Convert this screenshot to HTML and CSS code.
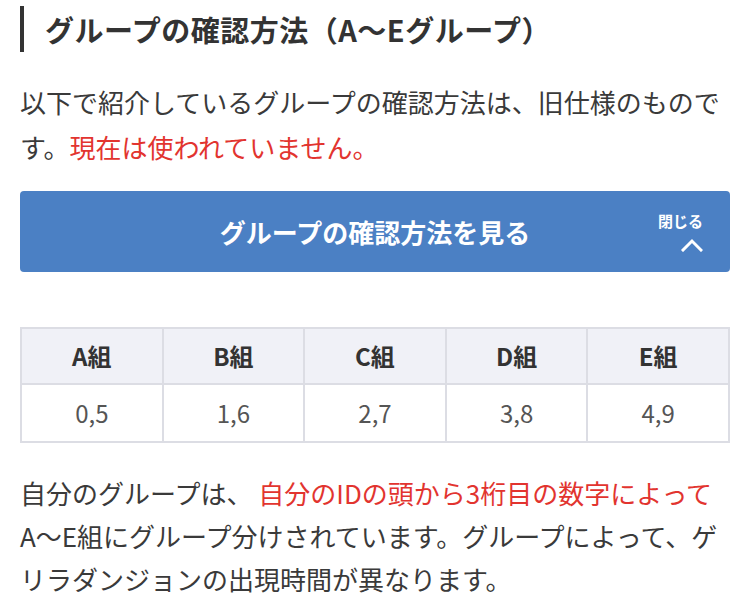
FILE: index.html
```html
<!DOCTYPE html>
<html lang="ja">
<head>
<meta charset="utf-8">
<title>グループの確認方法</title>
<link rel="stylesheet" href="styles.css">
</head>
<body>
<main class="content">
  <h3 class="heading">グループの確認方法（A〜Eグループ）</h3>
  <p class="text">以下で紹介しているグループの確認方法は、旧仕様のものです。<span class="red">現在は使われていません。</span></p>
  <div class="toggle-btn">
    <span class="spacer"></span>
    <span class="btn-title">グループの確認方法を見る</span>
    <span class="btn-side">
      <span class="close-label">閉じる</span>
      <svg class="chevron" width="22" height="14" viewBox="0 0 22 14"><path d="M2 12 L11 3 L20 12" fill="none" stroke="#fff" stroke-width="3" stroke-linecap="square"/></svg>
    </span>
  </div>
  <table class="groups">
    <thead>
      <tr><th>A組</th><th>B組</th><th>C組</th><th>D組</th><th>E組</th></tr>
    </thead>
    <tbody>
      <tr><td>0,5</td><td>1,6</td><td>2,7</td><td>3,8</td><td>4,9</td></tr>
    </tbody>
  </table>
  <p class="text text-bottom">自分のグループは、 <span class="red">自分のIDの頭から3桁目の数字によって</span>A〜E組にグループ分けされています。グループによって、ゲリラダンジョンの出現時間が異なります。</p>
</main>
</body>
</html>
```

FILE: styles.css
```css
html, body {
  margin: 0;
  padding: 0;
  background: #fff;
}
body {
  font-family: "Noto Sans CJK JP", "Noto Sans", sans-serif;
  color: #333;
}
.content {
  padding: 6px 20px 0;
}
.heading {
  margin: 0;
  border-left: 4px solid #333;
  padding-left: 21px;
  font-size: 29px;
  line-height: 46px;
  font-weight: 700;
  letter-spacing: 0.5px;
  color: #333;
}
.text {
  margin: 27px 0 0;
  font-size: 26px;
  line-height: 45px;
  color: #3a3a3a;
}
.red {
  color: #e2342f;
}
.toggle-btn {
  margin-top: 22px;
  height: 81px;
  background: #4b80c4;
  border-radius: 4px;
  display: grid;
  grid-template-columns: 1fr auto 1fr;
  align-items: center;
  color: #fff;
}
.btn-title {
  font-size: 26px;
  font-weight: 700;
  letter-spacing: 0;
}
.btn-side {
  justify-self: end;
  padding-right: 27px;
  display: flex;
  flex-direction: column;
  align-items: flex-end;
  gap: 8px;
}
.close-label {
  font-size: 15px;
  font-weight: 700;
  line-height: 18px;
}
.chevron {
  display: block;
}
.groups {
  margin-top: 55px;
  width: 100%;
  border-collapse: collapse;
  table-layout: fixed;
  font-size: 24px;
}
.groups th, .groups td {
  border: 2px solid #dcdde4;
  text-align: center;
  line-height: 36px;
}
.groups th {
  background: #f0f1f7;
  font-weight: 700;
  color: #333;
  padding: 9px 0;
}
.groups td {
  color: #555;
  font-weight: 400;
  padding: 10px 0;
}
.text-bottom {
  margin-top: 28px;
  line-height: 43px;
}
```
